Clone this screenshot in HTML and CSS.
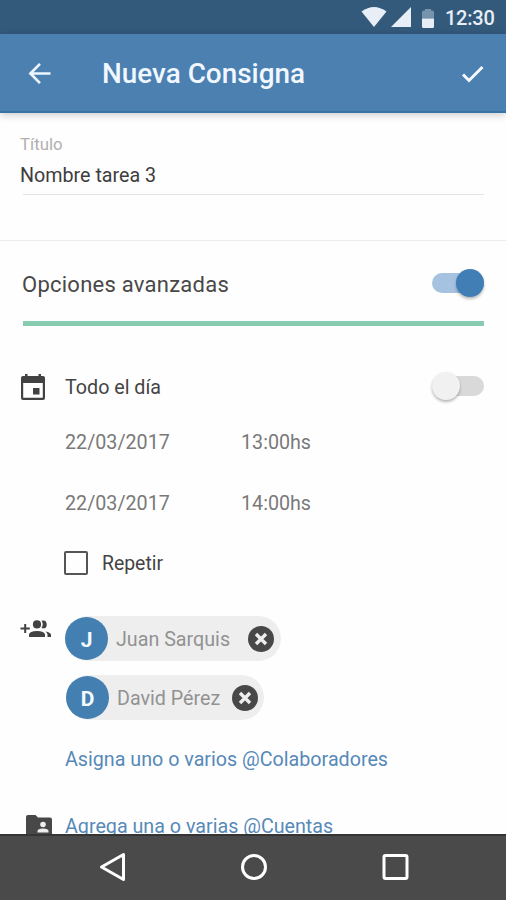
FILE: index.html
```html
<!DOCTYPE html>
<html lang="es">
<head>
<meta charset="utf-8">
<title>Nueva Consigna</title>
<link rel="stylesheet" href="styles.css">
</head>
<body>
<div class="screen">
  <div class="status">
    <svg class="wifi" viewBox="0 0 26 20"><path d="M.5 4.500Q13-4.500 25.500 4.500L13 20Z"/></svg>
    <svg class="signal" viewBox="0 0 20 20"><path d="M20 0V20H0Z"/></svg>
    <svg class="battery" viewBox="0 0 12 19"><path class="dim" d="M0 3Q0 1.500 1.500 1.500H3V0H9V1.500H10.500Q12 1.500 12 3V9.500H0Z"/><path d="M0 9.500H12V17.500Q12 19 10.500 19H1.500Q0 19 0 17.500Z"/></svg>
    <span class="clock">12:30</span>
  </div>
  <header class="appbar">
    <svg class="back" viewBox="0 0 24 24"><path d="M23.500 12H2.500M12.500 2L2.500 12L12.500 22"/></svg>
    <h1 class="title">Nueva Consigna</h1>
    <svg class="check" viewBox="0 0 24 18"><path d="M2 9.500L8 15.500L21.500 2"/></svg>
  </header>
  <main class="content">
    <section class="field">
      <label class="label">Título</label>
      <div class="value">Nombre tarea 3</div>
    </section>
    <section class="options">
      <span class="options-text">Opciones avanzadas</span>
      <span class="switch on"><i class="knob"></i></span>
    </section>
    <div class="row allday">
      <svg class="calendar" viewBox="0 0 24 26"><path fill-rule="evenodd" d="M4 0H6.500V2H17.500V0H20V2H22Q24 2 24 4V24Q24 26 22 26H2Q0 26 0 24V4Q0 2 2 2H4ZM2.200 9V23.700H21.800V9ZM12 14H18.500V20.500H12Z"/></svg>
      <span class="text">Todo el día</span>
      <span class="switch"><i class="knob"></i></span>
    </div>
    <div class="row date start"><span class="day">22/03/2017</span><span class="hour">13:00hs</span></div>
    <div class="row date"><span class="day">22/03/2017</span><span class="hour">14:00hs</span></div>
    <div class="row repeat"><span class="box"></span><span class="repeat-text">Repetir</span></div>
    <div class="people">
      <svg class="group" viewBox="0 0 31 18"><path d="M4.200 4H6.200V7.500H9.800V9.500H6.200V13H4.200V9.500H.5V7.500H4.200Z"/><circle cx="17" cy="4.400" r="4.100"/><path d="M9 17V14.500Q9.500 11 17 11T25 14.500V17ZM21.500 .7Q26.500-.7 26.700 4.300T21.500 8Q24 4.300 21.500 .7ZM25.500 11.500Q31 12.500 31 15V17H27.500V14.500Q27.500 13 25.500 11.500Z"/></svg>
      <div class="chips">
        <div class="chip juan"><span class="avatar">J</span><span class="name">Juan Sarquis</span><svg class="remove" viewBox="0 0 26 26"><circle cx="13" cy="13" r="13"/><path d="M8 8L18 18M18 8L8 18"/></svg></div>
        <div class="chip david"><span class="avatar">D</span><span class="name">David Pérez</span><svg class="remove" viewBox="0 0 26 26"><circle cx="13" cy="13" r="13"/><path d="M8 8L18 18M18 8L8 18"/></svg></div>
      </div>
    </div>
    <div class="row assign"><span class="link">Asigna uno o varios @Colaboradores</span></div>
    <div class="row accounts">
      <svg class="folder" viewBox="0 0 26 22"><path d="M0 2Q0 0 2 0H9.500L12 2.500H24Q26 2.500 26 4.500V22H0Z"/><g class="person"><circle cx="17" cy="9.500" r="2.800"/><path d="M11.500 17.500V16Q11.500 13.500 17 13.500T22.500 16V17.500Z"/></g></svg>
      <span class="link">Agrega una o varias @Cuentas</span>
    </div>
  </main>
  <nav class="nav">
    <svg viewBox="0 0 28 30"><path d="M24.500 2.500V27.500L2.500 15Z"/></svg>
    <svg viewBox="0 0 28 30"><circle cx="14" cy="15" r="11.500"/></svg>
    <svg viewBox="0 0 28 30"><rect x="3" y="3.500" width="23" height="23" rx="1.500"/></svg>
  </nav>
</div>
</body>
</html>
```
FILE: styles.css
```css
* { box-sizing: border-box; }
body { margin: 0; background: #fefefe; font-family: Roboto, "Liberation Sans", sans-serif; color: #444; }
svg { display: block; flex: none; }
.screen { width: 506px; height: 900px; display: flex; flex-direction: column; overflow: hidden; }
.status { height: 34px; flex: none; background: #33597b; display: flex; align-items: center; justify-content: flex-end; padding-right: 12px; fill: #e8eef6; }
.wifi { width: 26px; height: 20px; margin-right: 4px; }
.signal { width: 20px; height: 20px; margin-right: 11px; }
.battery { width: 12px; height: 19px; margin: 2px 11px 0 0; }
.dim { fill: #7893ac; }
.clock { color: #e8eef6; font-size: 20px; font-weight: 500; line-height: 34px; letter-spacing: -.25px; width: 49px; padding-top: 1px; white-space: nowrap; }
.appbar { height: 79px; flex: none; background: #4b80b1; border-bottom: 2px solid #3774a5; box-shadow: 0 2px 8px rgba(0,0,0,.2); display: flex; align-items: center; padding: 0 21px 0 28px; z-index: 1; }
.back { width: 23px; height: 23px; margin-top: 2px; fill: none; stroke: #edf5ff; stroke-width: 2.8; }
.title { margin: 2px 0 0 51px; flex: 1; color: #f0f7ff; font-size: 27.9px; font-weight: 500; line-height: 34px; }
.check { width: 24px; height: 18px; margin-top: 3px; fill: none; stroke: #f4f9ff; stroke-width: 3; }
.content { flex: 1; min-height: 0; overflow: hidden; }
.field { height: 128px; border-bottom: 1px solid #ececec; padding: 20px 22px 0 20px; }
.label { display: block; font-size: 16.8px; line-height: 22px; color: #b0b0b0; }
.value { height: 40px; padding-top: 9px; font-size: 19.7px; line-height: 24px; color: #3d3d3d; background: linear-gradient(#e4e4e4, #e4e4e4) 3px 100% / 100% 1.5px no-repeat; }
.options { height: 85px; margin: 0 22px 0 23px; border-bottom: 5px solid #87cbb0; display: flex; align-items: center; justify-content: space-between; padding-top: 7px; }
.options-text { font-size: 22px; letter-spacing: .25px; margin-left: -1px; color: #484848; }
.switch { position: relative; width: 52px; height: 28px; display: flex; align-items: center; justify-content: flex-start; }
.switch::before { content: ""; flex: none; width: 52px; height: 20px; margin-right: -52px; border-radius: 10px; background: #d9d9d9; }
.switch.on::before { margin-right: -28px; background: #a5c3e0; }
.options .switch { margin-top: -3px; }
.allday .switch { margin-top: -2px; }
.knob { position: relative; flex: none; width: 28px; height: 28px; border-radius: 50%; background: #f1f1f1; box-shadow: 0 2px 3px rgba(0,0,0,.28); }
.on .knob { background: #417eb6; }
.row { display: flex; align-items: center; padding: 0 22px 0 65px; font-size: 19.7px; }
.allday { height: 56px; margin-top: 33px; padding-left: 21px; }
.calendar { width: 24px; height: 26px; fill: #424242; }
.text { margin-left: 20px; padding-top: 1px; flex: 1; }
.date { height: 62px; color: #797979; }
.start { height: 54px; margin-bottom: 3px; }
.day { width: 176px; }
.repeat { height: 60px; margin-top: -1px; padding-left: 64px; }
.repeat-text { font-size: 19.4px; }
.box { width: 24px; height: 24px; border: 2px solid #555; border-radius: 2px; margin-right: 14px; }
.people { display: flex; padding-left: 20px; margin-top: 23px; }
.group { width: 31px; height: 18px; margin-top: 4px; fill: #424242; }
.chips { margin-left: 14px; display: flex; flex-direction: column; gap: 14px; }
.chip { height: 45px; border-radius: 23px; background: #eee; display: flex; align-items: center; font-size: 19.7px; color: #929292; }
.juan { width: 216px; }
.david { width: 198px; margin-left: 1px; }
.avatar { width: 43px; height: 43px; border-radius: 50%; background: #447fb1; color: #f5faff; font-weight: 700; font-size: 21px; line-height: 46px; text-align: center; }
.name { margin-left: 8px; padding-top: 2px; flex: 1; white-space: nowrap; }
.remove { width: 26px; height: 26px; margin-right: 7px; fill: #484848; }
.remove path { stroke: #eee; stroke-width: 3.4; }
.david .remove { margin-right: 6px; }
.link { color: #5689b8; white-space: nowrap; }
.assign { height: 78px; }
.accounts { height: 56px; padding-left: 26px; }
.folder { width: 26px; height: 22px; fill: #484848; }
.folder .person { fill: #eee; }
.accounts .link { margin-left: 13px; }
.nav { height: 66px; flex: none; background: #4a4a4a; border-top: 2px solid #353535; display: flex; justify-content: center; align-items: center; gap: 113px; padding: 0 0 2px 1px; }
.nav svg { width: 28px; height: 30px; fill: none; stroke: #fff; stroke-width: 3; stroke-linejoin: round; }
```
